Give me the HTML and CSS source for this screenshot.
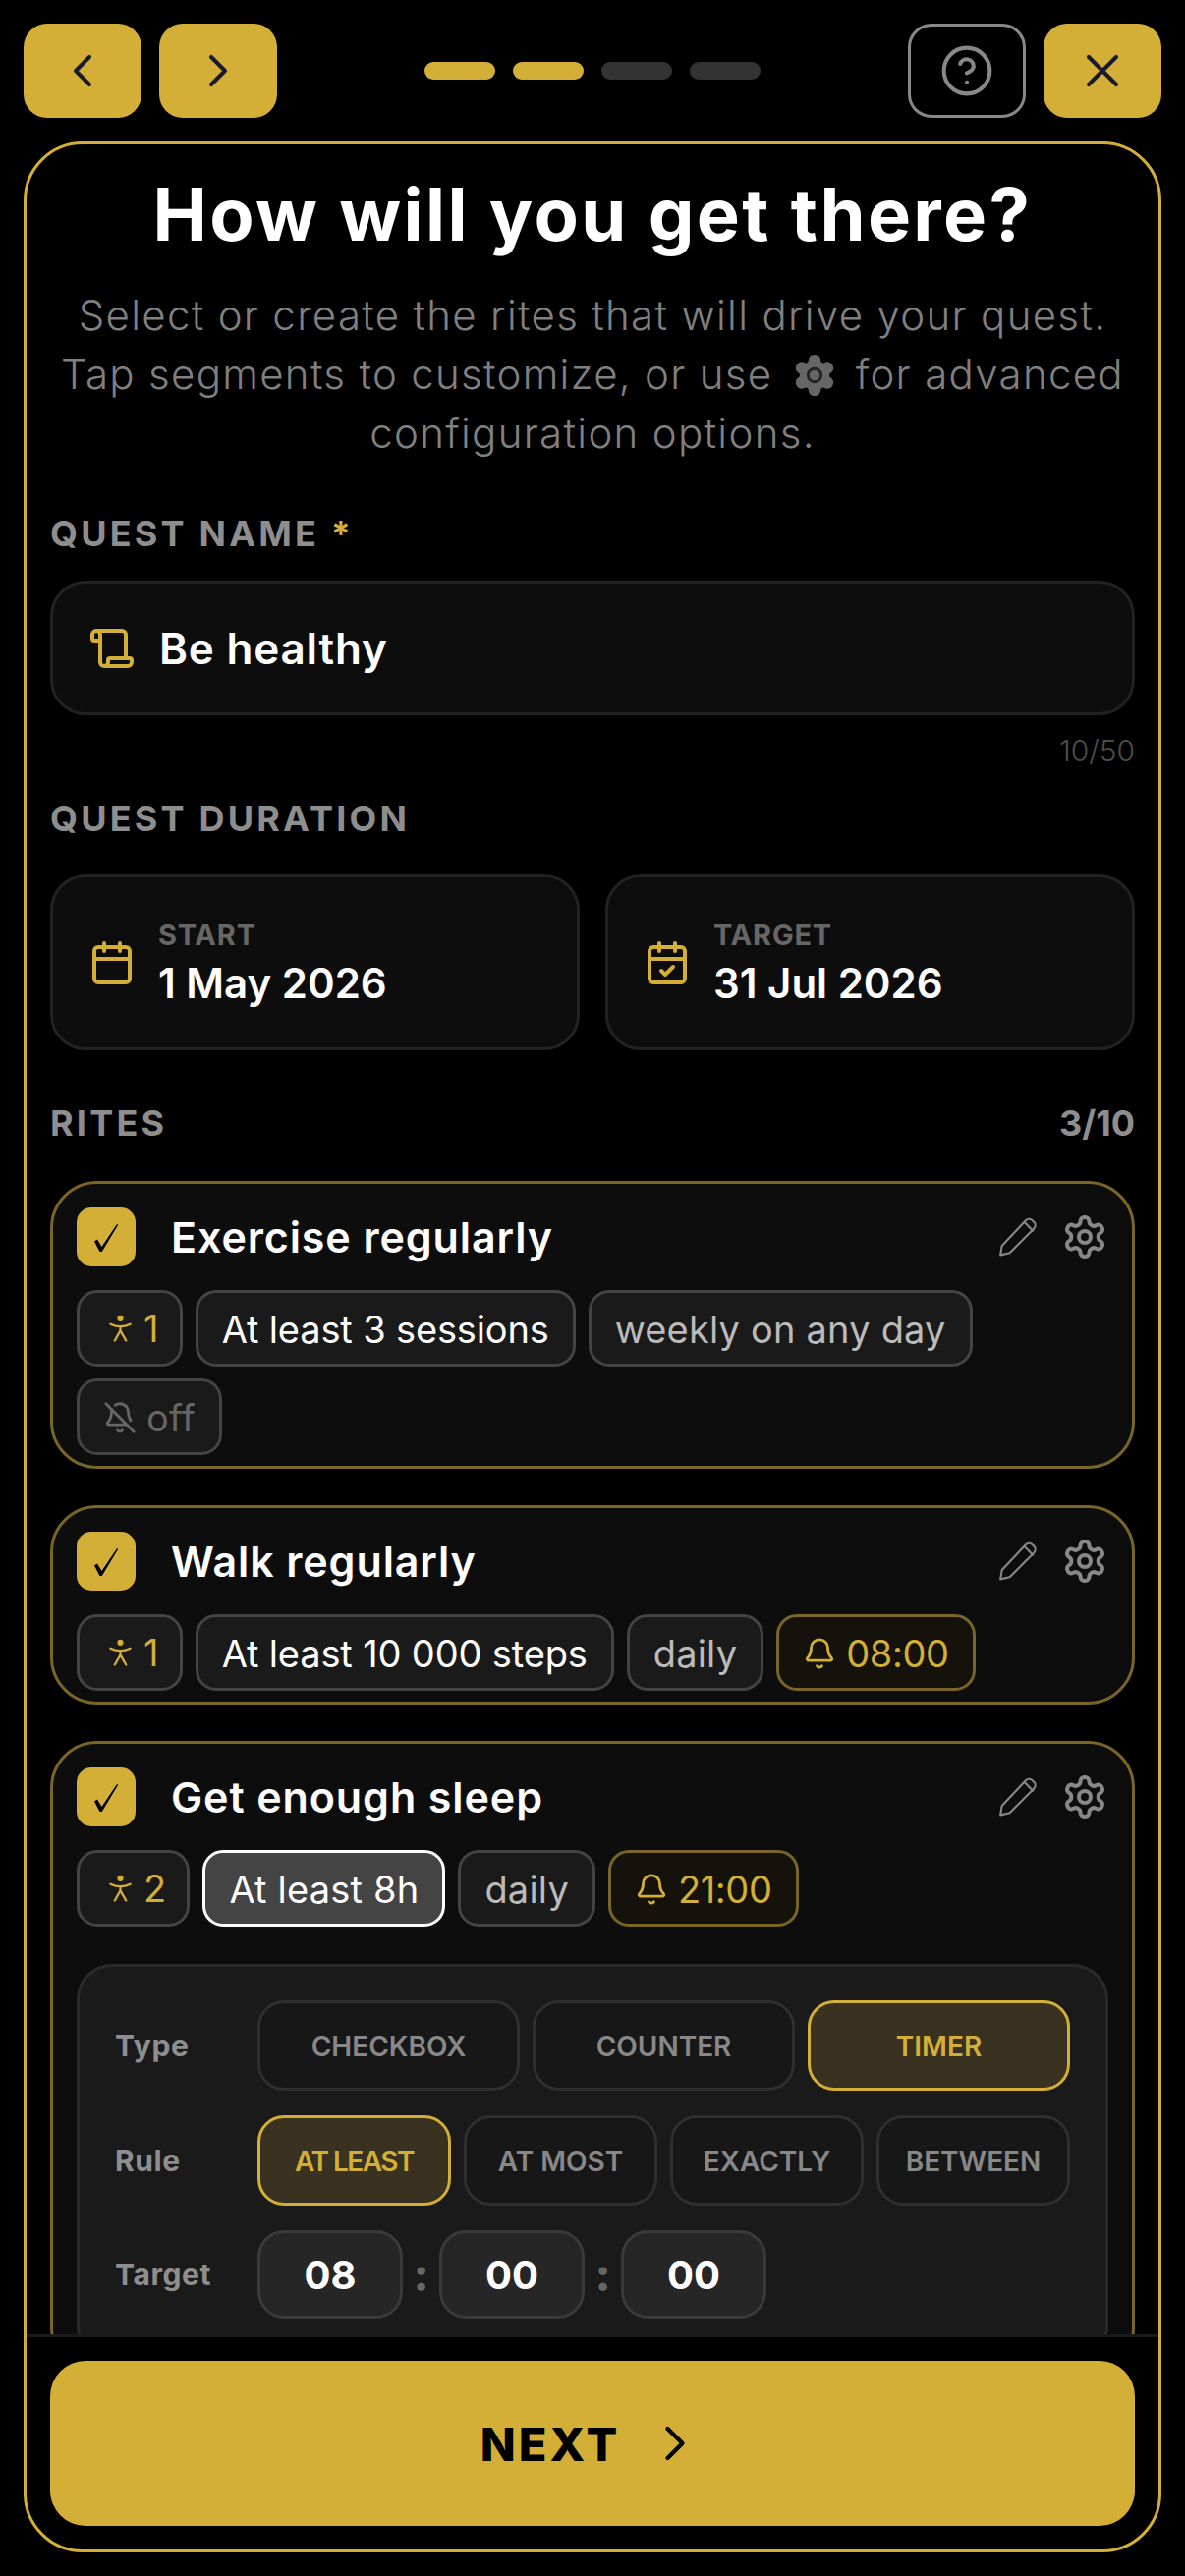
FILE: index.html
```html
<!DOCTYPE html>
<html lang="en">
<head>
<meta charset="utf-8">
<title>How will you get there?</title>
<link rel="stylesheet" href="styles.css">
</head>
<body>
<svg class="defs" width="0" height="0" aria-hidden="true">
  <symbol id="gear" viewBox="0 0 24 24"><path d="M12.22 2h-.44a2 2 0 0 0-2 2v.18a2 2 0 0 1-1 1.73l-.43.25a2 2 0 0 1-2 0l-.15-.08a2 2 0 0 0-2.73.73l-.22.38a2 2 0 0 0 .73 2.73l.15.1a2 2 0 0 1 1 1.72v.51a2 2 0 0 1-1 1.74l-.15.09a2 2 0 0 0-.73 2.73l.22.38a2 2 0 0 0 2.73.73l.15-.08a2 2 0 0 1 2 0l.43.25a2 2 0 0 1 1 1.73V20a2 2 0 0 0 2 2h.44a2 2 0 0 0 2-2v-.18a2 2 0 0 1 1-1.73l.43-.25a2 2 0 0 1 2 0l.15.08a2 2 0 0 0 2.73-.73l.22-.39a2 2 0 0 0-.73-2.73l-.15-.08a2 2 0 0 1-1-1.74v-.5a2 2 0 0 1 1-1.74l.15-.09a2 2 0 0 0 .73-2.73l-.22-.38a2 2 0 0 0-2.73-.73l-.15.08a2 2 0 0 1-2 0l-.43-.25a2 2 0 0 1-1-1.73V4a2 2 0 0 0-2-2z"/><circle cx="12" cy="12" r="3"/></symbol>
  <symbol id="pencil" viewBox="0 0 40 40"><path d="M3 37.500l1.500-9L27.500 4a4.500 4.500 0 0 1 6.500 0l1.500 1.500a4.500 4.500 0 0 1 0 6.300L12 35.500z"/><path d="M26.500 6l8 8"/></symbol>
  <symbol id="person" viewBox="0 0 24 28"><circle cx="12" cy="3.500" r="3.200" class="solid"/><path d="M1.500 9.500c3 1.500 6 2.500 10.500 2.500s7.500-1 10.500-2.500M12 12v5M12 16.500l-6 10.500M12 16.500l6 10.500"/></symbol>
  <symbol id="bell" viewBox="0 0 24 24"><path d="M10.268 21a2 2 0 0 0 3.464 0"/><path d="M3.262 15.326A1 1 0 0 0 4 17h16a1 1 0 0 0 .74-1.673C19.41 13.956 18 12.499 18 8A6 6 0 0 0 6 8c0 4.499-1.411 5.956-2.738 7.326"/></symbol>
  <symbol id="belloff" viewBox="0 0 24 24"><path d="M10.268 21a2 2 0 0 0 3.464 0"/><path d="M17 17H4a1 1 0 0 1-.74-1.673C4.59 13.956 6 12.499 6 8a6 6 0 0 1 .258-1.742"/><path d="m2 2 20 20"/><path d="M8.668 3.01A6 6 0 0 1 18 8c0 2.687.77 4.653 1.707 6.05"/></symbol>
  <symbol id="tick" viewBox="0 0 60 60"><path class="solid" d="M18 34.500l3-2 4.500 7.500L41 17l1.200.8L25.800 45h-2.300z"/></symbol>
</svg>
<div class="app">
  <header class="topbar">
    <div class="btn-group">
      <button class="nav-btn gold"><svg class="nav-icon" viewBox="0 0 24 24"><path d="m15 18-6-6 6-6"/></svg></button>
      <button class="nav-btn gold"><svg class="nav-icon" viewBox="0 0 24 24"><path d="m9 18 6-6-6-6"/></svg></button>
    </div>
    <div class="progress">
      <span class="dot on"></span><span class="dot on"></span><span class="dot"></span><span class="dot"></span>
    </div>
    <div class="btn-group">
      <button class="nav-btn outline"><svg class="nav-icon help" viewBox="0 0 24 24"><circle cx="12" cy="12" r="10"/><path d="M9.090 9a3 3 0 0 1 5.830 1c0 2-3 3-3 3"/><path d="M12 17h.01"/></svg></button>
      <button class="nav-btn gold"><svg class="nav-icon" viewBox="0 0 24 24"><path d="M18 6 6 18"/><path d="m6 6 12 12"/></svg></button>
    </div>
  </header>

  <main class="panel">
    <div class="scroll">
      <h1 class="title">How will you get there?</h1>
      <p class="intro">Select or create the rites that will drive your quest.<br>Tap segments to customize, or use <svg class="intro-gear" viewBox="0 0 24 24"><path d="M12.22 2h-.44a2 2 0 0 0-2 2v.18a2 2 0 0 1-1 1.73l-.43.25a2 2 0 0 1-2 0l-.15-.08a2 2 0 0 0-2.73.73l-.22.38a2 2 0 0 0 .73 2.73l.15.1a2 2 0 0 1 1 1.72v.51a2 2 0 0 1-1 1.74l-.15.09a2 2 0 0 0-.73 2.73l.22.38a2 2 0 0 0 2.73.73l.15-.08a2 2 0 0 1 2 0l.43.25a2 2 0 0 1 1 1.73V20a2 2 0 0 0 2 2h.44a2 2 0 0 0 2-2v-.18a2 2 0 0 1 1-1.73l.43-.25a2 2 0 0 1 2 0l.15.08a2 2 0 0 0 2.73-.73l.22-.39a2 2 0 0 0-.73-2.73l-.15-.08a2 2 0 0 1-1-1.74v-.5a2 2 0 0 1 1-1.74l.15-.09a2 2 0 0 0 .73-2.73l-.22-.38a2 2 0 0 0-2.73-.73l-.15.08a2 2 0 0 1-2 0l-.43-.25a2 2 0 0 1-1-1.73V4a2 2 0 0 0-2-2z"/><circle class="gear-hole" cx="12" cy="12" r="3.500"/></svg> for advanced<br>configuration options.</p>

      <div class="section-label first">QUEST NAME <span class="star">*</span></div>
      <div class="name-input">
        <svg class="field-icon" viewBox="0 0 24 24"><path d="M19 17V5a2 2 0 0 0-2-2H4"/><path d="M8 21h12a2 2 0 0 0 2-2v-1a1 1 0 0 0-1-1H11a1 1 0 0 0-1 1v1a2 2 0 1 1-4 0V5a2 2 0 1 0-4 0v2a1 1 0 0 0 1 1h3"/></svg>
        <span class="name-value">Be healthy</span>
      </div>
      <div class="counter">10/50</div>

      <div class="section-label duration">QUEST DURATION</div>
      <div class="dates">
        <div class="date-card">
          <svg class="field-icon" viewBox="0 0 24 24"><path d="M8 2v4"/><path d="M16 2v4"/><rect x="3" y="4" width="18" height="18" rx="2"/><path d="M3 10h18"/></svg>
          <div class="date-text"><span class="date-label">START</span><span class="date-value">1 May 2026</span></div>
        </div>
        <div class="date-card">
          <svg class="field-icon" viewBox="0 0 24 24"><path d="M8 2v4"/><path d="M16 2v4"/><rect x="3" y="4" width="18" height="18" rx="2"/><path d="M3 10h18"/><path d="m9 16 2 2 4-4"/></svg>
          <div class="date-text"><span class="date-label">TARGET</span><span class="date-value">31 Jul 2026</span></div>
        </div>
      </div>

      <div class="section-label rites-head"><span>RITES</span><span class="rites-count">3/10</span></div>

      <article class="rite">
        <div class="rite-head">
          <span class="check"><svg class="tick"><use href="#tick"/></svg></span><span class="rite-name">Exercise regularly</span>
          <svg class="act-icon pencil"><use href="#pencil"/></svg><svg class="act-icon gear"><use href="#gear"/></svg>
        </div>
        <div class="chips">
          <span class="chip people"><svg class="person"><use href="#person"/></svg>1</span>
          <span class="chip strong">At least 3 sessions</span>
          <span class="chip">weekly on any day</span>
          <span class="chip off"><svg class="bell"><use href="#belloff"/></svg>off</span>
        </div>
      </article>

      <article class="rite">
        <div class="rite-head">
          <span class="check"><svg class="tick"><use href="#tick"/></svg></span><span class="rite-name">Walk regularly</span>
          <svg class="act-icon pencil"><use href="#pencil"/></svg><svg class="act-icon gear"><use href="#gear"/></svg>
        </div>
        <div class="chips">
          <span class="chip people"><svg class="person"><use href="#person"/></svg>1</span>
          <span class="chip strong">At least 10 000 steps</span>
          <span class="chip">daily</span>
          <span class="chip alarm"><svg class="bell"><use href="#bell"/></svg>08:00</span>
        </div>
      </article>

      <article class="rite">
        <div class="rite-head">
          <span class="check"><svg class="tick"><use href="#tick"/></svg></span><span class="rite-name">Get enough sleep</span>
          <svg class="act-icon pencil"><use href="#pencil"/></svg><svg class="act-icon gear"><use href="#gear"/></svg>
        </div>
        <div class="chips">
          <span class="chip people"><svg class="person"><use href="#person"/></svg>2</span>
          <span class="chip selected">At least 8h</span>
          <span class="chip">daily</span>
          <span class="chip alarm"><svg class="bell"><use href="#bell"/></svg>21:00</span>
        </div>
        <div class="config">
          <div class="config-row">
            <span class="config-label">Type</span>
            <div class="options">
              <span class="option">CHECKBOX</span><span class="option">COUNTER</span><span class="option active">TIMER</span>
            </div>
          </div>
          <div class="config-row">
            <span class="config-label">Rule</span>
            <div class="options">
              <span class="option active tight">AT LEAST</span><span class="option">AT MOST</span><span class="option">EXACTLY</span><span class="option">BETWEEN</span>
            </div>
          </div>
          <div class="config-row">
            <span class="config-label">Target</span>
            <div class="time">
              <span class="time-box">08</span><span class="colon">:</span><span class="time-box">00</span><span class="colon">:</span><span class="time-box">00</span>
            </div>
          </div>
        </div>
      </article>
    </div>
    <footer class="footer">
      <button class="next">NEXT<svg class="next-icon" viewBox="0 0 24 24"><path d="m9 18 6-6-6-6"/></svg></button>
    </footer>
  </main>
</div>
</body>
</html>
```
FILE: styles.css
```css
* { box-sizing: border-box; }
html, body { margin: 0; background: #000; }
body { font-family: Inter, "Noto Sans", sans-serif; color: #fff; }
.defs { display: block; height: 0; }
svg { fill: none; stroke: currentColor; stroke-width: 2; stroke-linecap: round; stroke-linejoin: round; flex: none; }
.solid { fill: currentColor; stroke: none; }

.app { width: 1206px; height: 2622px; padding: 24px; display: flex; flex-direction: column; overflow: hidden; }

.topbar { height: 96px; flex: none; display: flex; justify-content: space-between; align-items: center; margin-bottom: 24px; }
.btn-group { display: flex; gap: 18px; }
.nav-btn { width: 120px; height: 96px; border: 0; border-radius: 24px; padding: 0; display: flex; align-items: center; justify-content: center; background: none; }
.nav-btn.gold { background: #d4af37; color: #1a1a2e; }
.nav-btn.outline { border: 3px solid #888; color: #888; }
.nav-icon { width: 56px; height: 56px; stroke-width: 1.750; }
.progress { display: flex; gap: 18px; }
.dot { width: 72px; height: 18px; border-radius: 9px; background: #333; }
.dot.on { background: #d4af37; }

.panel { height: 2454px; flex: none; border: 3px solid #d4af37; border-radius: 60px; display: flex; flex-direction: column; overflow: hidden; background: #000; }
.scroll { flex: 1; min-height: 0; overflow: hidden; padding: 29px 24px 0; }

.title { margin: 0; font-size: 74px; line-height: 84px; font-weight: 700; letter-spacing: 2.400px; text-align: center; white-space: nowrap; }
.intro { margin: 31px -12px 0; font-size: 42px; line-height: 60px; font-weight: 300; letter-spacing: 1.300px; color: #808080; text-align: center; white-space: nowrap; }
.intro-gear { width: 46px; height: 46px; vertical-align: -9px; margin: 0 6px; fill: #666; stroke: #666; }
.gear-hole { stroke: #222; stroke-width: 1.500; fill: #666; }

.section-label { font-size: 36px; line-height: 42px; font-weight: 700; color: #8e8e8e; letter-spacing: 3.200px; }
.section-label.first { margin-top: 51px; }
.section-label.duration { margin-top: 30px; }
.star { color: #d4af37; }

.name-input { height: 137px; margin-top: 27px; border: 3px solid #222; border-radius: 36px; background: #0d0d0d; display: flex; align-items: center; gap: 24px; padding: 0 36px; }
.field-icon { width: 48px; height: 48px; color: #d4af37; }
.name-value { font-size: 44px; font-weight: 600; letter-spacing: 0.800px; }
.counter { font-size: 30px; line-height: 36px; font-weight: 300; color: #4c4c4c; text-align: right; margin-top: 18px; }

.dates { display: grid; grid-template-columns: 1fr 1fr; gap: 26px; margin-top: 36px; }
.date-card { height: 179px; border: 3px solid #222; border-radius: 36px; background: #0d0d0d; display: flex; align-items: center; gap: 23px; padding: 0 36px; }
.date-text { display: flex; flex-direction: column; gap: 4px; padding-top: 3px; }
.date-label { font-size: 29px; line-height: 36px; font-weight: 700; color: #666; letter-spacing: 0.800px; }
.date-value { font-size: 42px; line-height: 54px; font-weight: 600; }

.rites-head { display: flex; justify-content: space-between; margin-top: 53px; }
.rites-count { letter-spacing: 0; }

.rite { border: 3px solid #7a6528; border-radius: 48px; background: #0d0d0d; padding: 24px 24px 11px; margin-top: 37px; }
.rites-head + .rite { margin-top: 38px; }
.rite-head { height: 60px; display: flex; align-items: center; }
.check { width: 60px; height: 60px; border-radius: 15px; background: #d4af37; color: #000; display: flex; }
.tick { width: 60px; height: 60px; }
.rite-name { flex: 1; margin-left: 36px; font-size: 43px; font-weight: 600; letter-spacing: 0.900px; }
.act-icon { width: 48px; height: 48px; color: #888; }
.act-icon.pencil { width: 42px; height: 42px; }
.act-icon.gear { margin-left: 23px; }

.chips { display: flex; flex-wrap: wrap; gap: 12px 13px; margin-top: 24px; }
.chip { height: 78px; padding: 2px 24px 0; border: 3px solid #444; border-radius: 21px; background: #1a1a1a; color: #bbb; font-size: 38px; letter-spacing: 0.200px; display: inline-flex; align-items: center; gap: 10px; }
.chip.strong { color: #fff; letter-spacing: -0.150px; }
.chip.people { color: #d4af37; padding: 0 21px 0 30px; gap: 12px; }
.chip.off { color: #666; }
.chip.alarm { color: #d4af37; border-color: #7a6528; background: #14120a; letter-spacing: -0.400px; }
.chip.selected { color: #fff; border-color: #fff; background: #444; letter-spacing: 0.200px; }
.person { width: 23px; height: 28px; stroke-width: 2.400; }
.bell { width: 34px; height: 34px; }

.config { margin-top: 38px; padding: 34px 36px 40px; border: 3px solid #2a2a2a; border-radius: 36px; background: #1a1a1a; display: flex; flex-direction: column; gap: 25px; }
.config-row { display: flex; align-items: center; }
.config-label { width: 145px; flex: none; font-size: 30px; font-weight: 700; color: #8e8e8e; letter-spacing: 0.600px; }
.options { flex: 1; display: flex; gap: 13px; }
.option { flex: 1; height: 92px; padding-top: 2px; border: 3px solid #2f2f2f; border-radius: 27px; display: flex; align-items: center; justify-content: center; font-size: 28px; font-weight: 600; color: #888; background: #171717; }
.option.active { border-color: #d4af37; color: #d4af37; background: #3a3220; }
.option.tight { letter-spacing: -1.500px; }
.time { display: flex; align-items: center; }
.time-box { width: 148px; height: 90px; border: 3px solid #3a3a3a; border-radius: 27px; background: #262626; display: flex; align-items: center; justify-content: center; font-size: 40px; font-weight: 700; }
.colon { width: 37px; text-align: center; font-size: 46px; font-weight: 800; color: #666; }

.footer { flex: none; border-top: 3px solid #1a1a1a; padding: 24px 24px 24px; }
.next { width: 100%; height: 168px; border: 0; border-radius: 36px; background: #d4af37; color: #000; display: flex; align-items: center; justify-content: center; gap: 32px; font: 800 47px Inter, sans-serif; letter-spacing: 3px; }
.next-icon { width: 60px; height: 60px; stroke-width: 1.750; margin-left: -6px; }
```
